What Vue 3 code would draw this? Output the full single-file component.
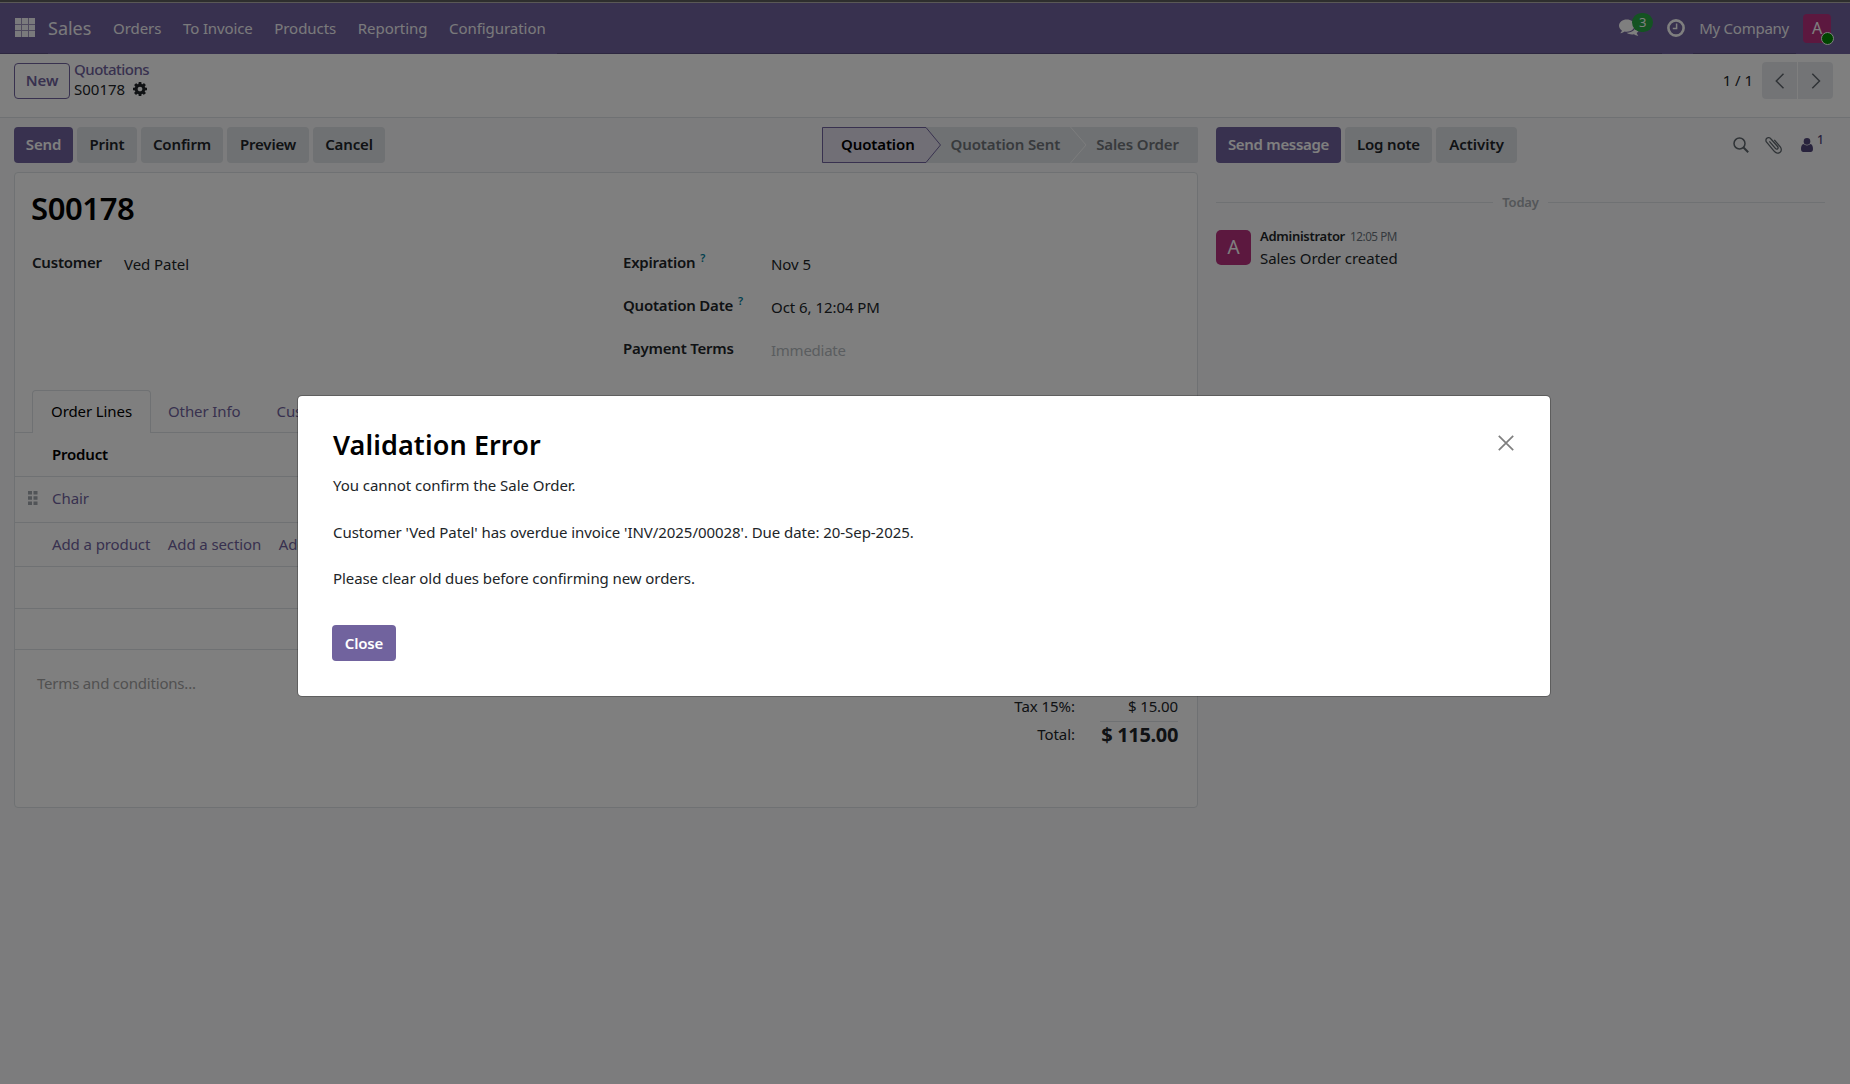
<script setup>
const menus = ['Orders', 'To Invoice', 'Products', 'Reporting', 'Configuration']
const actions = ['Print', 'Confirm', 'Preview', 'Cancel']
</script>

<template>
  <div class="page">
    <div class="chrome"></div>
    <header class="navbar">
      <svg class="apps" width="20" height="19" viewBox="0 0 20 19" fill="currentColor"><path d="M0 0h20v19H0z" opacity=".35" /><path d="M0 0h6v6H0zM7 0h6v6H7zM14 0h6v6h-6zM0 7h6v5H0zM7 7h6v5H7zM14 7h6v5h-6zM0 13h6v6H0zM7 13h6v6H7zM14 13h6v6h-6z" /></svg>
      <span class="brand">Sales</span>
      <nav class="menus"><span v-for="m in menus" :key="m" :class="m.split(' ').join('-').toLowerCase()">{{ m }}</span></nav>
      <div class="systray">
        <div class="chat">
          <svg width="20" height="18" viewBox="0 0 20 18" fill="currentColor"><path d="M15.500 6.600c0 3.500-3.500 6.200-7.800 6.200-.7 0-1.400-.1-2-.2-1.100.8-2.400 1.300-3.800 1.600-.3.100-.6-.3-.3-.5.700-.7 1.100-1.400 1.300-2.200C1.100 10.300 0 8.600 0 6.600 0 3.100 3.500.4 7.750.4s7.750 2.700 7.750 6.200z" /><path d="M17.200 5.600c1.700 1.100 2.800 2.600 2.800 4.400 0 1.600-.9 3-2.300 4 .2.800.7 1.500 1.300 2.200.3.300 0 .7-.3.600-1.500-.3-2.700-.8-3.800-1.600-2.600.5-5.500-.1-7.300-1.400 5.800.200 9.800-3.500 9.600-8.200z" /></svg>
          <span class="badge">3</span>
        </div>
        <svg class="clock" width="18" height="18" viewBox="0 0 18 18" fill="none" stroke="currentColor"><circle cx="9" cy="9" r="7.600" stroke-width="2.600" /><path d="M9.600 4.600v5H5.800" stroke-width="1.500" /></svg>
        <span class="company">My Company</span>
        <div class="user">A<i></i></div>
      </div>
    </header>

    <div class="control">
      <button class="btn outline">New</button>
      <div class="crumbs">
        <span class="parent">Quotations</span>
        <span class="current">S00178
          <svg width="14" height="14" viewBox="0 0 1536 1536"><path fill="currentColor" d="M1024 768q0-106-75-181t-181-75-181 75-75 181 75 181 181 75 181-75 75-181zm512-109v222q0 12-8 23t-20 13l-185 28q-19 54-39 91 35 50 107 138 10 12 10 25t-9 23q-27 37-99 108t-94 71q-12 0-26-9l-138-108q-44 23-91 38-16 136-29 186-7 28-36 28H657q-14 0-24.500-8.500T621 1506l-28-184q-49-16-90-37l-141 107q-10 9-25 9-14 0-25-11-126-114-165-168-7-10-7-23 0-12 8-23 15-21 51-66.500t54-70.500q-27-50-41-99L29 913q-13-2-21-12.500T0 877V655q0-12 8-23t19-13l186-28q14-46 39-92-40-57-107-138-10-12-10-24 0-10 9-23 26-36 98.500-107.500T337 135q13 0 26 10l138 107q44-23 91-38 16-136 29-186 7-28 36-28h222q14 0 24.500 8.500T915 30l28 184q49 16 90 37l142-107q9-9 24-9 13 0 25 10 129 119 165 170 7 8 7 22 0 12-8 23-15 21-51 66.500t-54 70.500q26 50 41 98l183 28q13 2 21 12.500t8 23.500z" /></svg>
        </span>
      </div>
      <div class="pager">
        <span class="count">1 / 1</span>
        <span class="page-btn prev"><svg width="10" height="16" viewBox="0 0 10 16"><path d="M8.500.8 1.300 8l7.200 7.200" /></svg></span>
        <span class="page-btn next"><svg width="10" height="16" viewBox="0 0 10 16"><path d="M1.300.8 8.500 8l-7.200 7.200" /></svg></span>
      </div>
    </div>

    <main class="content">
      <section class="form">
        <div class="statusbar">
          <button class="btn primary send">Send</button>
          <button v-for="a in actions" :key="a" class="btn" :class="a.toLowerCase()">{{ a }}</button>
          <div class="stages">
            <svg class="stages-bg" width="376" height="36" viewBox="0 0 376 36">
              <path d="M0 0h374q2 0 2 2v32q0 2-2 2H0z" fill="#dee2e6" />
              <path d="M248.500 0 264 18l-15.500 18" fill="none" stroke="#f8f9fa" stroke-width="1" />
              <path d="M.5.5H104L118.500 18 104 35.500H.5z" fill="#e2dfec" stroke="#71639e" />
            </svg>
            <span class="stage on">Quotation</span><span class="stage">Quotation Sent</span><span class="stage">Sales Order</span>
          </div>
        </div>

        <div class="sheet">
          <h1>S00178</h1>
          <div class="fields">
            <div class="col left">
              <div class="row"><label>Customer</label><span>Ved Patel</span></div>
            </div>
            <div class="col">
              <div class="row"><label>Expiration<sup>?</sup></label><span>Nov 5</span></div>
              <div class="row"><label>Quotation Date<sup>?</sup></label><span>Oct 6, 12:04 PM</span></div>
              <div class="row"><label>Payment Terms</label><span class="placeholder">Immediate</span></div>
            </div>
          </div>
          <div class="tabs">
            <span class="tab active">Order Lines</span><span class="tab other">Other Info</span><span class="tab">Customer Signature</span>
          </div>
          <div class="list">
            <div class="line head">Product</div>
            <div class="line item">
              <svg class="handle" width="10" height="14" viewBox="0 0 10 14"><path d="M0 0h4v3.500H0zM5.500 0h4v3.500h-4zM0 5.200h4v3.600H0zM5.500 5.200h4v3.600h-4zM0 10.500h4V14H0zM5.500 10.500h4V14h-4z" fill="#a3a8ae" /></svg>
              Chair
            </div>
            <div class="line links"><span>Add a product</span><span>Add a section</span><span>Add a note</span></div>
            <div class="line empty1"></div>
            <div class="line empty2"></div>
          </div>
          <div class="footer">
            <span class="terms">Terms and conditions...</span>
            <div class="totals">
              <span>Tax 15%:</span><span class="amount">$ 15.00</span>
              <span class="total-label">Total:</span><strong>$ 115.00</strong>
            </div>
          </div>
        </div>
      </section>

      <aside class="chatter">
        <div class="chatter-bar">
          <button class="btn primary message">Send message</button>
          <button class="btn note">Log note</button>
          <button class="btn activity">Activity</button>
          <div class="tools">
            <svg width="16" height="16" viewBox="0 0 16 16" fill="none" stroke="currentColor" stroke-width="1.500"><circle cx="6.500" cy="6.500" r="5.500" /><path d="m10.500 10.500 4.700 4.700" stroke-width="2" /></svg>
            <svg class="clip" width="17" height="18" viewBox="0 0 17 18" fill="none" stroke="currentColor" stroke-width="1.300" stroke-linecap="round"><path d="M4.800 5.800l5.600 6.600c.7.800 1.700.9 2.300.4.600-.5.600-1.500-.1-2.300L6 3C4.800 1.500 3 1.200 1.800 2.200S.600 5 1.800 6.400l7.300 8.800c1.800 2.100 4.400 2.500 6 1.100 1.600-1.300 1.600-3.800 0-5.700L9.700 4.300" /></svg>
            <span class="followers">
              <svg width="12" height="14" viewBox="0 0 12 14" fill="currentColor"><circle cx="6" cy="3.400" r="3.300" /><path d="M2.600 6c.9.900 2 1.400 3.400 1.400S8.500 6.900 9.400 6C11.300 6.300 12 8.400 12 11c0 1.800-.9 3-2.300 3H2.300C.9 14 0 12.800 0 11c0-2.600.7-4.700 2.600-5z" /></svg>
              <b>1</b>
            </span>
          </div>
        </div>
        <div class="day"><span>Today</span></div>
        <div class="msg">
          <div class="avatar">A</div>
          <div>
            <div class="meta"><b>Administrator</b><time>12:05 PM</time></div>
            <p>Sales Order created</p>
          </div>
        </div>
      </aside>
    </main>

    <div class="backdrop">
      <div class="modal" role="dialog">
        <div class="modal-head">
          <h2>Validation Error</h2>
          <svg width="16" height="16" viewBox="0 0 16 16"><path d="m.8.800 14.400 14.400M15.200.8.800 15.200" stroke="#7f7f7f" stroke-width="1.700" fill="none" /></svg>
        </div>
        <p>You cannot confirm the Sale Order.</p>
        <p class="long">Customer 'Ved Patel' has overdue invoice 'INV/2025/00028'. Due date: 20-Sep-2025.</p>
        <p class="long last">Please clear old dues before confirming new orders.</p>
        <button class="btn primary close">Close</button>
      </div>
    </div>
  </div>
</template>

<style>
body { margin: 0; }
</style>

<style scoped>
* { box-sizing: border-box; }
.page {
  position: relative;
  display: flex;
  flex-direction: column;
  width: 1850px;
  height: 1084px;
  overflow: hidden;
  background: #f8f9fa;
  color: #212529;
  font: 400 15px/22px "Noto Sans", "Open Sans", sans-serif;
  letter-spacing: -0.05px;
  white-space: nowrap;
}
svg { display: block; flex: none; }
h1, h2, p { margin: 0; }
.chrome { height: 3px; background: #5c5c5c; border-bottom: 1px solid #b4b0ac; }
.navbar {
  display: flex;
  align-items: center;
  height: 51px;
  padding: 0 19px 2px 15px;
  background:
    linear-gradient(90deg, #5b4f80 48px, transparent 48px 557px, #5b4f80 557px 1662px, transparent 1662px 1693px, #5b4f80 1693px 1796px, transparent 1796px) 0 100% / 100% 1px no-repeat,
    #71639e;
  color: #fff;
}
.apps, .brand, .menus, .company { opacity: .93; }
.brand { margin-left: 13px; width: 65px; font-size: 18px; letter-spacing: 0; }
.menus { display: flex; gap: 21.600px; }
.menus .to-invoice { letter-spacing: -.12px; }
.systray { display: flex; align-items: center; margin-left: auto; }
.chat { position: relative; width: 48px; height: 18px; }
.badge {
  position: absolute;
  left: 13px;
  top: -6px;
  width: 21px;
  height: 19px;
  border-radius: 10px;
  background: #28a745;
  font-size: 13px;
  line-height: 18px;
  text-align: center;
}
.company { margin: 0 14px 0 14px; letter-spacing: -.25px; }
.user {
  position: relative;
  width: 28px;
  height: 29px;
  margin-top: 1px;
  border-radius: 4px;
  background: #b8307f;
  font-size: 16px;
  line-height: 29px;
  text-align: center;
}
.user i {
  position: absolute;
  right: -3px;
  bottom: -2px;
  width: 13px;
  height: 13px;
  border: 1px solid #fff;
  border-radius: 50%;
  background: #008a00;
}
.btn {
  display: flex;
  align-items: center;
  justify-content: center;
  height: 36px;
  padding: 0 0 2px;
  border: 0;
  border-radius: 4px;
  background: #dee2e6;
  color: #212529;
  font: 600 15px/22px "Noto Sans", "Open Sans", sans-serif;
  letter-spacing: -.15px;
}
.primary { background: #71639e; color: #fff; }
.outline { width: 56px; border: 1px solid #71639e; background: #fff; color: #71639e; }
.control {
  display: flex;
  align-items: flex-start;
  height: 64px;
  padding: 9px 17px 0 14px;
  border-bottom: 1px solid #dee2e6;
  background: #fff;
}
.crumbs { display: flex; flex-direction: column; margin: -4px 0 0 4px; line-height: 20px; }
.parent { color: #71639e; font-weight: 500; letter-spacing: -.52px; }
.current { display: flex; align-items: center; gap: 8px; letter-spacing: 0; }
.pager { display: flex; align-items: center; margin: -1px 0 0 auto; height: 37px; }
.count { margin: 0 9px 1px 0; }
.page-btn {
  display: flex;
  align-items: center;
  justify-content: center;
  width: 35px;
  height: 37px;
  background: #e7e9ed;
}
.page-btn path { fill: none; stroke: #5f666d; stroke-width: 1.500; }
.prev { border-radius: 4px 0 0 4px; }
.next { margin-left: 1px; border-radius: 0 4px 4px 0; }

.content { display: flex; flex: 1; padding: 9px 25px 0 14px; }
.form { width: 1184px; }
.statusbar { display: flex; gap: 4px; }
.send { width: 59px; }
.print { width: 60px; }
.confirm, .preview { width: 82px; }
.cancel { width: 72px; }
.stages { position: relative; display: flex; width: 376px; height: 36px; margin-left: auto; }
.stages-bg { position: absolute; inset: 0; }
.stage {
  position: relative;
  margin-left: 36px;
  color: #70757a;
  font-weight: 600;
  line-height: 34px;
  letter-spacing: -.12px;
}
.stage.on { margin-left: 19px; color: #000; }

.sheet {
  height: 636px;
  margin-top: 9px;
  border: 1px solid #dee2e6;
  border-radius: 4px;
  background: #fff;
}
h1 {
  margin: 14px 0 0 16px;
  color: #000;
  font: 600 31px/42px "Noto Sans", "Open Sans", sans-serif;
  letter-spacing: -.4px;
}
.fields { display: flex; height: 150px; margin-top: 18px; padding-left: 17px; }
.col.left { width: 591px; --label: 92px; }
.col { --label: 148px; }
.row { display: flex; height: 43px; line-height: 30px; }
.row label { width: var(--label); font-weight: 600; letter-spacing: -.22px; }
.row span { padding-top: 2px; }
.row .placeholder { color: #b5bac0; letter-spacing: -.25px; }
sup { margin-left: 5px; color: #017e9c; font-size: 11px; line-height: 1; vertical-align: 6px; }
.tabs { display: flex; height: 43px; margin-top: -7px; padding-left: 17px; border-bottom: 1px solid #dee2e6; }
.tab { height: 42px; margin-right: 36px; line-height: 43px; color: #71639e; letter-spacing: -.1px; }
.tab.active {
  width: 119px;
  height: 43px;
  margin-right: 17px;
  border: 1px solid #dee2e6;
  border-bottom: 0;
  border-radius: 4px 4px 0 0;
  background: #fff;
  color: #000;
  text-align: center;
  line-height: 41px;
}
.line { display: flex; align-items: center; padding-left: 37px; border-bottom: 1px solid #dee2e6; color: #71639e; }
.head { height: 44px; padding-bottom: 2px; color: #000; font-weight: 600; letter-spacing: -.2px; }
.item { height: 46px; padding: 0 0 4px 13px; }
.handle { margin-right: 14px; }
.links { height: 44px; gap: 17.500px; padding-bottom: 2px; letter-spacing: -.1px; }
.empty1 { height: 42px; }
.empty2 { height: 41px; }
.footer { display: flex; padding: 22px 19px 0 22px; }
.terms { color: #a2a2a2; letter-spacing: -.2px; }
.totals {
  display: grid;
  grid-template-columns: auto 78px;
  column-gap: 25px;
  margin: 21px 0 0 auto;
  text-align: right;
}
.totals > * { line-height: 26px; }
.amount { padding-bottom: 2px; letter-spacing: -.1px; }
.totals strong { border-top: 1px solid #dee2e6; font-size: 20px; line-height: 25px; letter-spacing: -.35px; }

.chatter { flex: 1; margin-left: 18px; }
.chatter-bar { display: flex; gap: 4px; }
.message { width: 125px; letter-spacing: -.3px; }
.note { width: 87px; letter-spacing: -.2px; }
.activity { width: 81px; letter-spacing: 0; }
.tools { display: flex; align-items: center; margin-left: auto; padding-bottom: 1px; color: #5f666d; }
.clip { margin: 0 19px 0 16px; }
.followers { display: flex; margin-right: 2px; color: #51467a; }
.followers b { margin: -5px 0 0 4px; font-size: 12px; font-weight: 500; line-height: 14px; width: 6px; }
.day {
  display: flex;
  align-items: center;
  gap: 9px;
  height: 22px;
  margin-top: 28px;
  color: #a8adb2;
  font-size: 13px;
  font-weight: 600;
}
.day span { letter-spacing: -.2px; }
.day::before, .day::after { content: ""; flex: 1; height: 1px; background: #dee2e6; }
.msg { display: flex; margin-top: 16px; }
.avatar {
  width: 35px;
  height: 35px;
  margin: 1px 9px 0 0;
  border-radius: 5px;
  background: #b8307f;
  color: #fff;
  font-size: 19px;
  line-height: 35px;
  text-align: center;
}
.meta { display: flex; align-items: baseline; gap: 5px; line-height: 14px; }
.meta b { font-size: 13px; font-weight: 600; letter-spacing: -.28px; }
time { color: #6c757d; font-size: 11.700px; letter-spacing: -.45px; }
.msg p { margin-top: 4px; }

.backdrop {
  position: absolute;
  inset: 0;
  background: rgba(0, 0, 0, .5);
}
.modal {
  width: 1254px;
  height: 302px;
  margin: 395px 0 0 297px;
  padding: 28px 36px 0 35px;
  border: 1px solid rgba(0, 0, 0, .25);
  border-radius: 5px;
  background: #fff;
  background-clip: padding-box;
}
.modal-head { display: flex; justify-content: space-between; height: 49px; }
.modal-head svg { margin: 11px 0 0; }
h2 { color: #000; font: 600 27px/42px "Noto Sans", "Open Sans", sans-serif; letter-spacing: .1px; }
.modal p { line-height: 24px; }
.modal p.long { margin-top: 22.500px; letter-spacing: -.05px; }
.modal p.last { letter-spacing: -.08px; }
.close { width: 64px; margin: 35px 0 0 -1px; padding-bottom: 1px; }
</style>
